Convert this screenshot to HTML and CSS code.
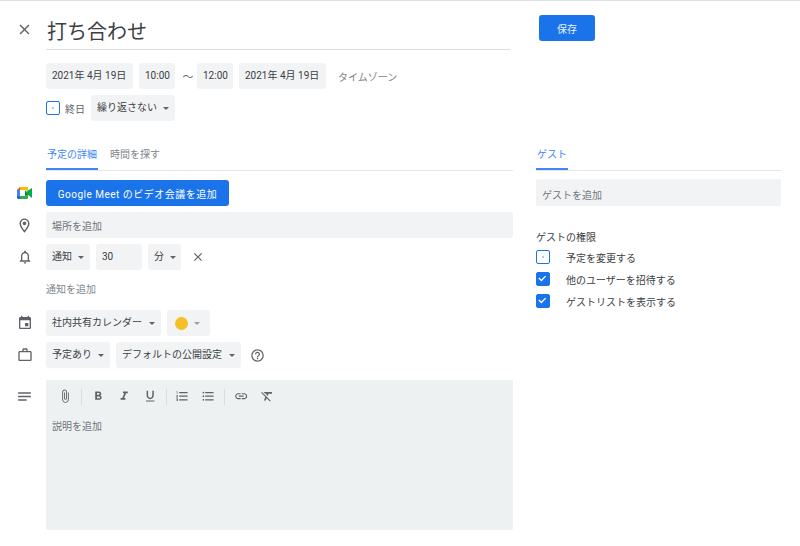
FILE: index.html
```html
<!DOCTYPE html>
<html lang="ja">
<head>
  <meta charset="UTF-8" />
  <meta name="viewport" content="width=device-width, initial-scale=1" />
  <title>打ち合わせ</title>
  <link rel="stylesheet" href="styles.css">
</head>
<body>
  <div class="page">
    <div class="main">
      <div class="row title-row">
        <div class="gutter"><svg class="icon close" viewBox="0 0 24 24"><path d="M19 6.410L17.590 5 12 10.590 6.410 5 5 6.410 10.590 12 5 17.590 6.410 19 12 13.410 17.590 19 19 17.590 13.410 12z"/></svg></div>
        <div class="title">打ち合わせ</div>
      </div>

      <div class="row date-row">
        <div class="gutter"></div>
        <div class="chip wide">2021年 4月 19日</div>
        <div class="chip time">10:00</div>
        <span class="tilde">〜</span>
        <div class="chip time">12:00</div>
        <div class="chip wide">2021年 4月 19日</div>
        <span class="timezone">タイムゾーン</span>
      </div>

      <div class="row allday-row">
        <div class="gutter"></div>
        <span class="check"></span>
        <span class="allday">終日</span>
        <div class="chip drop repeat">繰り返さない<i class="caret"></i></div>
      </div>

      <div class="row tabs-row">
        <div class="gutter"></div>
        <div class="tabs">
          <span class="tab active">予定の詳細</span>
          <span class="tab">時間を探す</span>
        </div>
      </div>

      <div class="row meet-row">
        <div class="gutter">
          <svg class="meet" viewBox="0 0 15 12">
            <path fill="#ea4335" d="M3 0v3H0z"/>
            <path fill="#fbbc04" d="M3 0h6.800c.7 0 1.200.5 1.200 1.200V3.500H8V3H3z"/>
            <path fill="#4285f4" d="M0 3h3v6H0z"/>
            <path fill="#1967d2" d="M0 9h3v3H1.200C.5 12 0 11.500 0 10.800z"/>
            <path fill="#34a853" d="M3 9h5V8h3v2.800c0 .7-.5 1.200-1.200 1.200H3z"/>
            <path fill="#00832d" d="M8 3.500L11 6v2H8z"/>
            <path fill="#00ac47" d="M8 6l3-2.500 4-2.500v10l-4-3z"/>
          </svg>
        </div>
        <button class="meet-btn">Google Meet のビデオ会議を追加</button>
      </div>

      <div class="row place-row">
        <div class="gutter"><svg class="icon" viewBox="0 0 24 24"><path d="M12 2C8.130 2 5 5.130 5 9c0 5.250 7 13 7 13s7-7.750 7-13c0-3.870-3.130-7-7-7zM7 9c0-2.760 2.240-5 5-5s5 2.240 5 5c0 2.880-2.880 7.190-5 9.880C9.920 16.210 7 11.850 7 9z"/><circle cx="12" cy="9" r="2.500"/></svg></div>
        <div class="field">場所を追加</div>
      </div>

      <div class="row notify-row">
        <div class="gutter"><svg class="icon small" viewBox="0 0 24 24"><path d="M12 22c1.100 0 2-.9 2-2h-4c0 1.100.9 2 2 2zm6-6v-5c0-3.070-1.630-5.640-4.500-6.320V4c0-.83-.67-1.500-1.500-1.500s-1.500.67-1.500 1.500v.68C7.640 5.360 6 7.920 6 11v5l-2 2v1h16v-1l-2-2zm-2 1H8v-6c0-2.480 1.510-4.500 4-4.500s4 2.020 4 4.500v6z"/></svg></div>
        <div class="chip drop notify">通知<i class="caret"></i></div>
        <div class="chip minutes">30</div>
        <div class="chip drop unit">分<i class="caret"></i></div>
        <svg class="icon close-small" viewBox="0 0 24 24"><path d="M19 6.410L17.590 5 12 10.590 6.410 5 5 6.410 10.590 12 5 17.590 6.410 19 12 13.410 17.590 19 19 17.590 13.410 12z"/></svg>
      </div>

      <div class="row add-row">
        <div class="gutter"></div>
        <span class="add-notify">通知を追加</span>
      </div>

      <div class="row calendar-row">
        <div class="gutter"><svg class="icon small" viewBox="0 0 24 24"><path d="M17 12h-5v5h5v-5zM16 1v2H8V1H6v2H5c-1.110 0-1.990.9-1.990 2L3 19c0 1.100.89 2 2 2h14c1.100 0 2-.9 2-2V5c0-1.100-.9-2-2-2h-1V1h-2zm3 18H5V8h14v11z"/></svg></div>
        <div class="chip drop calendar">社内共有カレンダー<i class="caret"></i></div>
        <div class="chip drop color"><span class="dot"></span><i class="caret light"></i></div>
      </div>

      <div class="row status-row">
        <div class="gutter"><svg class="icon small" viewBox="0 0 24 24"><path d="M14 6V4h-4v2h4zM4 8v11h16V8H4zm16-2c1.110 0 2 .89 2 2v11c0 1.110-.89 2-2 2H4c-1.110 0-2-.89-2-2l.01-11c0-1.110.88-2 1.990-2h4V4c0-1.110.89-2 2-2h4c1.110 0 2 .89 2 2v2h4z"/></svg></div>
        <div class="chip drop busy">予定あり<i class="caret"></i></div>
        <div class="chip drop visibility">デフォルトの公開設定<i class="caret"></i></div>
        <svg class="icon help" viewBox="0 0 24 24"><path d="M11 18h2v-2h-2v2zm1-16C6.480 2 2 6.480 2 12s4.480 10 10 10 10-4.480 10-10S17.520 2 12 2zm0 18c-4.410 0-8-3.590-8-8s3.590-8 8-8 8 3.590 8 8-3.590 8-8 8zm0-14c-2.210 0-4 1.790-4 4h2c0-1.100.9-2 2-2s2 .9 2 2c0 2-3 1.750-3 5h2c0-2.250 3-2.500 3-5 0-2.210-1.790-4-4-4z"/></svg>
      </div>

      <div class="row desc-row">
        <div class="gutter notes"><svg class="icon" viewBox="0 0 24 24"><path d="M3 18h12v-2H3v2zM3 6v2h18V6H3zm0 7h18v-2H3v2z"/></svg></div>
        <div class="desc">
          <div class="toolbar">
            <svg class="tool" viewBox="0 0 24 24"><path d="M16.500 6v11.500c0 2.210-1.790 4-4 4s-4-1.790-4-4V5c0-1.380 1.120-2.500 2.500-2.500s2.500 1.120 2.500 2.500v10.500c0 .55-.45 1-1 1s-1-.45-1-1V6H10v9.500c0 1.380 1.120 2.500 2.500 2.500s2.500-1.120 2.500-2.500V5c0-2.210-1.790-4-4-4S7 2.790 7 5v12.500c0 3.040 2.460 5.500 5.500 5.500s5.500-2.460 5.500-5.500V6h-1.500z"/></svg>
            <i class="sep"></i>
            <svg class="tool" viewBox="0 0 24 24"><path d="M15.600 10.790c.97-.67 1.650-1.770 1.650-2.790 0-2.260-1.750-4-4-4H7v14h7.040c2.090 0 3.710-1.700 3.710-3.790 0-1.520-.86-2.820-2.150-3.420zM10 6.500h3c.83 0 1.500.67 1.500 1.500s-.67 1.500-1.500 1.500h-3v-3zm3.500 9H10v-3h3.500c.83 0 1.500.67 1.500 1.500s-.67 1.500-1.500 1.500z"/></svg>
            <svg class="tool" viewBox="0 0 24 24"><path d="M10 4v3h2.210l-3.420 8H6v3h8v-3h-2.210l3.420-8H18V4z"/></svg>
            <svg class="tool" viewBox="0 0 24 24"><path d="M12 17c3.310 0 6-2.690 6-6V3h-2.500v8c0 1.930-1.570 3.500-3.500 3.500S8.500 12.930 8.500 11V3H6v8c0 3.310 2.690 6 6 6zm-7 2v2h14v-2H5z"/></svg>
            <i class="sep"></i>
            <svg class="tool" viewBox="0 0 24 24"><path d="M2 17h2v.5H3v1h1v.5H2v1h3v-4H2v1zm1-9h1V4H2v1h1v3zm-1 3h1.800L2 13.100v.9h3v-1H3.200L5 10.900V10H2v1zm5-6v2h14V5H7zm0 14h14v-2H7v2zm0-6h14v-2H7v2z"/></svg>
            <svg class="tool" viewBox="0 0 24 24"><path d="M4 10.500c-.83 0-1.500.67-1.500 1.500s.67 1.500 1.500 1.500 1.500-.67 1.500-1.500-.67-1.500-1.500-1.500zm0-6c-.83 0-1.500.67-1.500 1.500S3.170 7.500 4 7.500 5.500 6.830 5.500 6 4.830 4.500 4 4.500zm0 12c-.83 0-1.500.68-1.500 1.500s.68 1.500 1.500 1.500 1.500-.68 1.500-1.500-.67-1.500-1.500-1.500zM7 19h14v-2H7v2zm0-6h14v-2H7v2zm0-8v2h14V5H7z"/></svg>
            <i class="sep"></i>
            <svg class="tool" viewBox="0 0 24 24"><path d="M3.900 12c0-1.710 1.390-3.100 3.100-3.100h4V7H7c-2.760 0-5 2.240-5 5s2.240 5 5 5h4v-1.900H7c-1.710 0-3.100-1.390-3.100-3.100zM8 13h8v-2H8v2zm9-6h-4v1.900h4c1.710 0 3.100 1.390 3.100 3.100s-1.390 3.100-3.100 3.100h-4V17h4c2.760 0 5-2.240 5-5s-2.240-5-5-5z"/></svg>
            <svg class="tool" viewBox="0 0 24 24"><path d="M3.270 5L2 6.270l6.970 6.970L6.500 19h3l1.570-3.660L16.730 21 18 19.730 3.550 5.270 3.270 5zM6 5v.18L8.820 8h2.400l-.72 1.680 2.100 2.100L14.210 8H20V5H6z"/></svg>
          </div>
          <div class="desc-text">説明を追加</div>
        </div>
      </div>
    </div>

    <div class="side">
      <button class="save">保存</button>
      <div class="tabs guest-tabs">
        <span class="tab active">ゲスト</span>
      </div>
      <div class="field guest-field">ゲストを追加</div>
      <div class="perm-title">ゲストの権限</div>
      <div class="perm"><span class="check"></span>予定を変更する</div>
      <div class="perm"><span class="check on"><svg viewBox="0 0 14 14"><path d="M2.500 6.800l3.300 3.200 5.700-5.800" /></svg></span>他のユーザーを招待する</div>
      <div class="perm"><span class="check on"><svg viewBox="0 0 14 14"><path d="M2.500 6.800l3.300 3.200 5.700-5.800" /></svg></span>ゲストリストを表示する</div>
    </div>
  </div>
</body>
</html>
```

FILE: styles.css
```css
body {
  margin: 0;
  font-family: Roboto, "Noto Sans CJK JP", sans-serif;
  font-size: 10px;
  color: #3c4043;
  background: #fff;
  border-top: 1px solid #dfe1e5;
  overflow: hidden;
}
.page {
  display: flex;
  height: 545px;
}
.main {
  width: 513px;
}
.side {
  width: 245px;
  margin-left: 23px;
}
.row {
  display: flex;
  align-items: center;
  height: 26px;
}
.gutter {
  width: 46px;
  flex: none;
  display: flex;
  justify-content: center;
  padding-left: 3px;
  box-sizing: border-box;
}
.icon {
  width: 17px;
  height: 17px;
  fill: #5f6368;
  display: block;
}
.icon.small {
  width: 16px;
  height: 16px;
}

/* titulo */
.title-row {
  height: 38px;
  margin-top: 11px;
}
.title-row .gutter {
  padding-bottom: 4px;
}
.title {
  width: 464px;
  height: 38px;
  line-height: 41px;
  box-sizing: border-box;
  border-bottom: 1px solid #dadce0;
  font-size: 20px;
  padding-left: 1px;
  color: #3c4043;
  overflow: hidden;
}

.chip {
  height: 26px;
  line-height: 26px;
  background: #f1f3f4;
  border-radius: 3px;
  padding: 0 6px;
  box-sizing: border-box;
  white-space: nowrap;
  margin-right: 6px;
}
.drop {
  display: flex;
  align-items: center;
  justify-content: space-between;
}
.caret {
  width: 0;
  height: 0;
  border-left: 3px solid transparent;
  border-right: 3px solid transparent;
  border-top: 3px solid #5f6368;
  margin-left: 6px;
}
.caret.light {
  border-top-color: #9aa0a6;
}

/* fechas */
.date-row {
  margin-top: 13px;
}
.wide {
  width: 87px;
}
.time {
  width: 36px;
}
.tilde {
  width: 16px;
  margin-left: -1px;
  margin-right: 1px;
  text-align: center;
  font-size: 11px;
  color: #5f6368;
}
.timezone {
  margin-left: 6px;
  color: #80868b;
}
.allday-row {
  margin-top: 6px;
}
.check {
  width: 13.500px;
  height: 13.500px;
  flex: none;
  box-sizing: border-box;
  border: 1.500px solid #1a73e8;
  border-radius: 2px;
  background: radial-gradient(circle, #8ab4f8 0 .6px, #fff 1px);
  display: block;
}
.check.on {
  background: #1a73e8;
}
.check svg {
  display: block;
  width: 10.500px;
  height: 10.500px;
  fill: none;
  stroke: #fff;
  stroke-width: 1.800;
}
.allday {
  margin-left: 5.500px;
  margin-right: 6px;
  color: #5f6368;
}
.repeat {
  width: 84px;
}

/* pestañas */
.tabs-row {
  height: 30px;
  margin-top: 20px;
}
.tabs {
  flex: 1;
  height: 30px;
  display: flex;
  gap: 12px;
  box-sizing: border-box;
  border-bottom: 1px solid #e3e5e8;
}
.tab {
  height: 29px;
  line-height: 27px;
  box-sizing: border-box;
  color: #80868b;
}
.tab.active {
  color: #4285f4;
  padding: 0 1px;
  border-bottom: 2px solid #4285f4;
}

.meet-row {
  margin-top: 9px;
}
.meet {
  width: 15px;
  height: 12px;
  display: block;
}
.meet-btn {
  width: 183px;
  height: 26px;
  border: none;
  border-radius: 3px;
  background: #1a73e8;
  color: #fff;
  font: inherit;
  letter-spacing: .5px;
  padding: 0;
}
.place-row {
  margin-top: 6px;
}
.field {
  flex: 1;
  height: 26px;
  line-height: 30px;
  background: #f1f3f4;
  border-radius: 2px;
  padding: 0 6px;
  color: #70757a;
  box-sizing: border-box;
}
.notify-row {
  margin-top: 6px;
}
.notify {
  width: 44px;
}
.minutes {
  width: 46px;
}
.unit {
  width: 33px;
}
.close-small {
  width: 14px;
  height: 14px;
  margin-left: 4px;
}
.add-row {
  margin-top: 6px;
}
.add-notify {
  color: #80868b;
  margin-bottom: 2px;
}
.calendar-row {
  margin-top: 8px;
}
.calendar {
  width: 115px;
}
.color {
  width: 43px;
  padding: 0 8px;
  justify-content: flex-start;
}
.dot {
  width: 13px;
  height: 13px;
  border-radius: 50%;
  background: #f6bf26;
}
.status-row {
  margin-top: 6px;
}
.busy {
  width: 64px;
}
.visibility {
  width: 125px;
}
.help {
  width: 15px;
  height: 15px;
  margin-left: 3px;
}

/* descripcion */
.desc-row {
  height: 150px;
  margin-top: 12px;
  align-items: flex-start;
}
.notes {
  padding-top: 8px;
}
.desc {
  flex: 1;
  height: 150px;
  background: #eef1f2;
  border-radius: 2px;
}
.toolbar {
  display: flex;
  align-items: center;
  height: 33px;
  padding-left: 11.800px;
  gap: 11.600px;
}
.tool {
  width: 14.400px;
  height: 14.400px;
  fill: #5f6368;
  flex: none;
}
.sep {
  width: 1px;
  height: 16px;
  margin: 0 -2.800px 0 -3px;
  background: #dadce0;
}
.desc-text {
  margin-top: 5px;
  padding-left: 6px;
  color: #70757a;
}

/* columna derecha */
.save {
  display: block;
  width: 56px;
  height: 26px;
  margin: 14px 0 0 3px;
  border: none;
  border-radius: 3px;
  background: #1a73e8;
  color: #e8f0fe;
  font: inherit;
  padding: 0;
}
.guest-tabs {
  margin-top: 100px;
}
.guest-field {
  height: 27px;
  line-height: 34px;
  margin-top: 8px;
}
.perm-title {
  margin-top: 25px;
  line-height: 14px;
}
.perm {
  display: flex;
  align-items: center;
  height: 22px;
}
.perm .check {
  margin-right: 16.500px;
}
.perm-title + .perm {
  margin-top: 1px;
}
```
